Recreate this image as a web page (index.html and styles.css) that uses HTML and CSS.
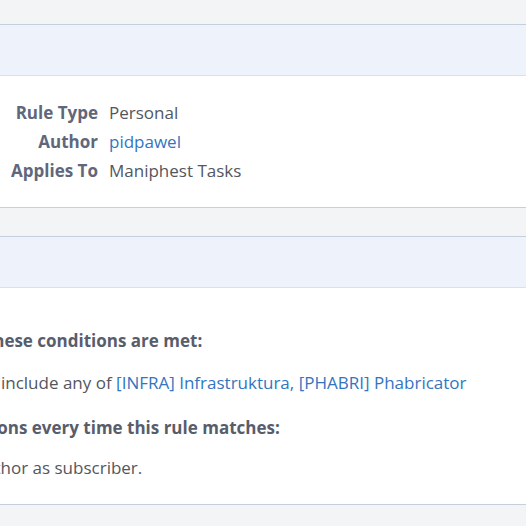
FILE: index.html
```html
<!DOCTYPE html>
<html lang="en">
<head>
    <meta charset="UTF-8">
    <title>Herald Rule</title>
    <link rel="stylesheet" href="styles.css">
</head>
<body>
    <div class="page">
        <div class="box">
            <div class="box-head"></div>
            <div class="box-body props">
                <div class="prop-key">Rule Type</div>
                <div class="prop-value">Personal</div>
                <div class="prop-key">Author</div>
                <div class="prop-value"><a href="#">pidpawel</a></div>
                <div class="prop-key">Applies To</div>
                <div class="prop-value">Maniphest Tasks</div>
            </div>
        </div>

        <div class="box">
            <div class="box-head"></div>
            <div class="box-body rule">
                <p class="rule-title t1">When all of these conditions are met:</p>
                <p class="rule-line l1">Projects include any of <span class="handles"><a href="#">[INFRA] Infrastruktura</a>, <a href="#">[PHABRI] Phabricator</a></span></p>
                <p class="rule-title t2">Take these actions every time this rule matches:</p>
                <p class="rule-line l2">Add rule author as subscriber.</p>
            </div>
        </div>
    </div>
</body>
</html>
```

FILE: styles.css
```css
html, body{
    margin: 0;
    padding: 0;
    background: #f3f4f6;
    font-family: "Open Sans", "Noto Sans", sans-serif;
    font-size: 17px;
    color: #53565e;
    overflow: hidden;
}
a{
    color: #3375c0;
    text-decoration: none;
}
.handles{
    color: #3375c0;
}
.page{
    padding-top: 24px;
}
.box{
    background: #fff;
    border-top: 1px solid #c6d0dd;
    border-bottom: 1px solid #c6d0dd;
    margin-bottom: 28px;
}
.box-head{
    height: 50px;
    background: #eef2fa;
    border-bottom: 1px solid #d9e1ec;
}

/* property list */
.props{
    display: grid;
    grid-template-columns: 98px auto;
    column-gap: 11px;
    padding: 22px 0 22px;
    line-height: 29px;
}
.prop-key{
    text-align: right;
    font-weight: bold;
    color: #61677a;
    white-space: nowrap;
}

/* rule text */
.rule{
    padding: 43px 0 25px;
    height: 148px;
}
.rule p{
    margin: 0;
    line-height: 20px;
    white-space: nowrap;
}
.rule-title{
    font-weight: bold;
    color: #585d6c;
}
.rule .t1{ margin-left: -114px; }
.rule .l1{ margin-top: 22px; margin-left: -67px; }
.rule .t2{ margin-top: 25px; margin-left: -131px; }
.rule .l2{ margin-top: 20px; margin-left: -97px; }
```
